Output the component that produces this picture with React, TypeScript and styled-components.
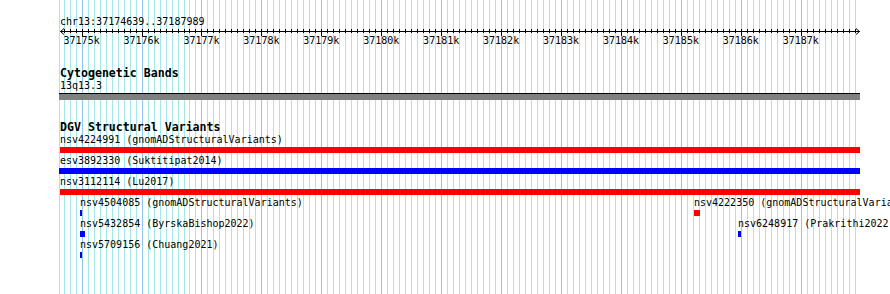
import React from "react";
import styled, { createGlobalStyle } from "styled-components";

const VIEW_START = 37174639;
const VIEW_END = 37187989;
const LEFT = 60;
const WIDTH = 800;

const MINOR = "#a4e8e8";
const MAJOR = "#8ec6f0";

const bpToPx = (bp: number) => LEFT + ((bp - VIEW_START) * WIDTH) / (VIEW_END - VIEW_START);

const ticks: number[] = [];
for (let b = 37174700; b <= 37187900; b += 100) ticks.push(b);

interface Feature {
  name: string;
  source: string;
  left: number;
  width: number;
  color: string;
}

// rows as laid out by the track
const rows: Feature[][] = [
  [{ name: "nsv4224991", source: "gnomADStructuralVariants", left: 60, width: 800, color: "#ff0000" }],
  [{ name: "esv3892330", source: "Suktitipat2014", left: 59, width: 801, color: "#0000ff" }],
  [{ name: "nsv3112114", source: "Lu2017", left: 60, width: 800, color: "#ff0000" }],
  [
    { name: "nsv4504085", source: "gnomADStructuralVariants", left: 80, width: 2, color: "#0000ff" },
    { name: "nsv4222350", source: "gnomADStructuralVariants", left: 694, width: 6, color: "#ff0000" },
  ],
  [
    { name: "nsv5432854", source: "ByrskaBishop2022", left: 80, width: 5, color: "#0000ff" },
    { name: "nsv6248917", source: "Prakrithi2022", left: 738, width: 3, color: "#0000ff" },
  ],
  [{ name: "nsv5709156", source: "Chuang2021", left: 80, width: 2, color: "#0000ff" }],
];

const GlobalStyle = createGlobalStyle`
  html, body {
    margin: 0;
    padding: 0;
    background: #ffffff;
  }
  body {
    font-family: "DejaVu Sans Mono", "Liberation Mono", monospace;
    color: #000000;
  }
`;

const Page = styled.div`
  position: relative;
  width: 890px;
  height: 294px;
  overflow: hidden;
  background: #ffffff;
`;

const GridLayer = styled.svg`
  position: absolute;
  top: 0;
  left: 0;
  z-index: 0;
  shape-rendering: crispEdges;
`;

const Content = styled.div`
  position: relative;
  z-index: 1;
  padding-top: 16px;
`;

const ChrLabel = styled.div`
  padding-left: ${LEFT}px;
  font-size: 10px;
  line-height: 12px;
  white-space: nowrap;
`;

const Axis = styled.svg`
  display: block;
  font-family: "DejaVu Sans Mono", "Liberation Mono", monospace;
  font-size: 10px;
`;

const Track = styled.section<{ $gap: number }>`
  margin-top: ${(p) => p.$gap}px;
`;

const TrackTitle = styled.div`
  padding-left: ${LEFT}px;
  font-size: 11.6px;
  font-weight: bold;
  line-height: 13px;
  white-space: nowrap;
`;

const BandLabel = styled.div`
  padding-left: ${LEFT}px;
  font-size: 10px;
  line-height: 12px;
`;

const BandBar = styled.div`
  margin-top: 1px;
  margin-left: ${LEFT - 1}px;
  width: ${WIDTH + 1}px;
  height: 6px;
  border-top: 1px solid #000000;
  background: #808080;
`;

const Row = styled.div`
  position: relative;
  height: 21px;
`;

const FeatureBox = styled.div`
  position: absolute;
  top: 0;
`;

const FeatureLabel = styled.div`
  font-size: 10px;
  line-height: 12px;
  white-space: nowrap;
`;

const FeatureBar = styled.div<{ $color: string }>`
  margin-top: 1px;
  height: 6px;
  background: ${(p) => p.$color};
`;

const Grid = () => (
  <GridLayer width={890} height={294}>
    <rect x={59} y={0} width={1} height={294} fill={MINOR} />
    {ticks.map((b) => {
      const major = b % 1000 === 0;
      return (
        <rect key={b} x={Math.round(bpToPx(b))} y={0} width={1} height={294} fill={major ? MAJOR : MINOR} />
      );
    })}
  </GridLayer>
);

const Ruler = () => (
  <Axis width={890} height={20}>
    <line x1={LEFT} x2={LEFT + WIDTH} y1={3.5} y2={3.5} stroke="#000" />
    <polyline points={`${LEFT + 4},0.5 ${LEFT + 0.5},3.5 ${LEFT + 4},6.5`} fill="none" stroke="#000" />
    <polyline points={`${LEFT + WIDTH - 4},0.5 ${LEFT + WIDTH - 0.5},3.5 ${LEFT + WIDTH - 4},6.5`} fill="none" stroke="#000" />
    {ticks.map((b) => {
      const x = Math.round(bpToPx(b)) + 0.5;
      const major = b % 1000 === 0;
      return <line key={b} x1={x} x2={x} y1={1} y2={major ? 8 : 5} stroke="#000" />;
    })}
    {ticks
      .filter((b) => b % 1000 === 0)
      .map((b) => (
        <text key={b} x={bpToPx(b)} y={16} textAnchor="middle" fill="#000">
          {b / 1000}k
        </text>
      ))}
  </Axis>
);

export default function App() {
  return (
    <>
      <GlobalStyle />
      <Page>
        <Grid />
        <Content>
          <ChrLabel>chr13:37174639..37187989</ChrLabel>
          <Ruler />
          <Track $gap={19}>
            <TrackTitle>Cytogenetic Bands</TrackTitle>
            <BandLabel>13q13.3</BandLabel>
            <BandBar />
          </Track>
          <Track $gap={21}>
            <TrackTitle>DGV Structural Variants</TrackTitle>
            {rows.map((row, i) => (
              <Row key={i}>
                {row.map((f) => (
                  <FeatureBox key={f.name} style={{ left: f.left }}>
                    <FeatureLabel style={{ marginLeft: Math.max(LEFT - f.left, 0) }}>
                      {f.name} ({f.source})
                    </FeatureLabel>
                    <FeatureBar $color={f.color} style={{ width: f.width }} />
                  </FeatureBox>
                ))}
              </Row>
            ))}
          </Track>
        </Content>
      </Page>
    </>
  );
}
